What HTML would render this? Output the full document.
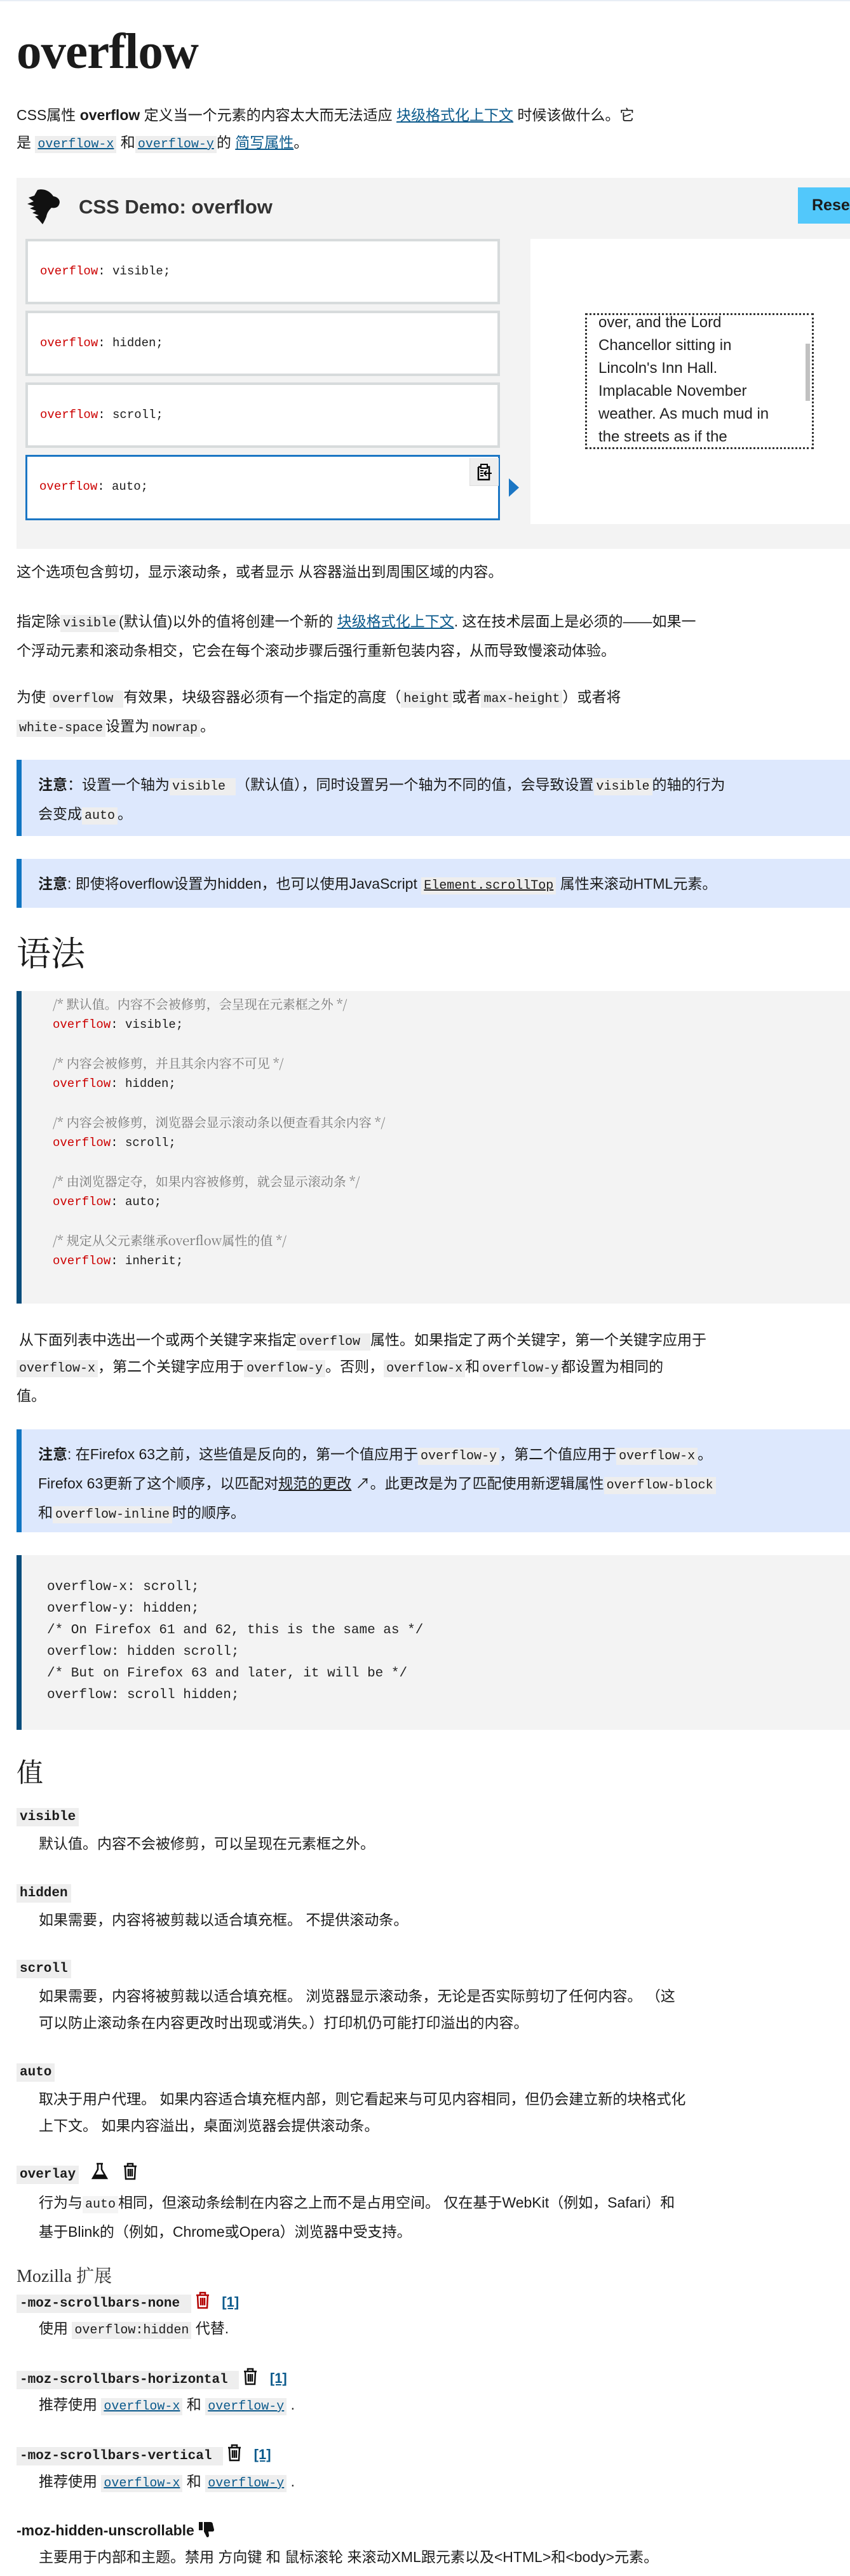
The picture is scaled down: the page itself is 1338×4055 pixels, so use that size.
<!DOCTYPE html>
<html><head><meta charset="utf-8">
<style>
*{margin:0;padding:0;box-sizing:border-box}
html,body{width:1338px;height:4055px;overflow:hidden;background:#fff}
body{position:relative;font-family:"Liberation Sans","Noto Sans CJK SC",sans-serif;font-size:23px;color:#1b1b1b;line-height:42px}
.a{position:absolute;left:26px;white-space:nowrap}
code,.m{font-family:"Liberation Mono","Noto Sans CJK SC",monospace;font-size:20px;background:#eeeeee;padding:2px 4px}
a{color:#0b5a8c;text-decoration:underline}
h1{position:absolute;left:26px;top:44px;font-family:"Liberation Serif",serif;font-weight:bold;font-size:79px;line-height:76px;letter-spacing:-1px}
.note{position:absolute;left:26px;right:0;background:#dde8fd;border-left:8px solid #1075c2;padding:18px 0 0 26px;white-space:nowrap}
.cb{position:absolute;left:26px;right:0;background:#f3f3f3;border-left:8px solid #0a4d7c;white-space:pre;font-family:"Liberation Mono","Noto Serif CJK SC",monospace}
.kw{color:#c00}
.cm{color:#777;font-family:"Noto Serif CJK SC","Liberation Mono",serif;font-size:20px}
.dt{position:absolute;left:26px;font-family:"Liberation Mono",monospace;font-weight:bold;font-size:21px;white-space:nowrap}
.dt span.c{background:#eee;padding:3px 5px}
.dd{position:absolute;left:61px;white-space:nowrap}
.ch{position:absolute;left:40px;width:747px;height:103px;background:#fff;border:4px solid #d7dbdc;font-family:"Liberation Mono",monospace;font-size:19px;padding-left:19px;line-height:95px}
</style></head><body>
<div style="position:absolute;left:0;top:0;width:1338px;height:2px;background:#e8eef5"></div>
<h1>overflow</h1>
<div class="a" style="top:160px;line-height:43px">CSS属性 <b>overflow</b> 定义当一个元素的内容太大而无法适应 <a>块级格式化上下文</a> 时候该做什么。它<br>是 <code><a>overflow-x</a></code> 和<code><a>overflow-y</a></code>的 <a>简写属性</a>。</div>

<div style="position:absolute;left:26px;top:280px;width:1312px;height:584px;background:#f3f3f3">
 <svg style="position:absolute;left:15px;top:17px" width="54" height="56" viewBox="0 0 54 56"><path d="M18 2 C28 -1 38 4 43 12 C50 13 55 18 52 25 C50 30 45 31 40 30 C36 34 33 38 32 44 C30 49 28 53 26 56 C22 51 19 47 14 44 L20 42 L10 38 L16 35 L6 31 L13 28 L2 24 L12 20 L4 14 L13 11 Z" fill="#111"/></svg>
 <div style="position:absolute;left:98px;top:26px;font-size:31px;font-weight:bold;color:#333;line-height:40px">CSS Demo: overflow</div>
 <div style="position:absolute;left:1230px;top:15px;width:90px;height:57px;background:#52c8fb;font-weight:bold;font-size:25px;line-height:57px;padding-left:22px;color:#1b1b1b">Reset</div>
 <div style="position:absolute;left:809px;top:96px;width:503px;height:449px;background:#fff"></div>
</div>
<div class="ch" style="top:376px"><span class="kw">overflow</span>: visible;</div>
<div class="ch" style="top:489px"><span class="kw">overflow</span>: hidden;</div>
<div class="ch" style="top:602px"><span class="kw">overflow</span>: scroll;</div>
<div class="ch" style="top:716px;border:3px solid #1b76c4;height:103px"><span class="kw">overflow</span>: auto;
 <div style="position:absolute;left:696px;top:2px;width:46px;height:44px;background:#eee;border-left:1px solid #ddd;border-bottom:1px solid #ddd">
  <svg style="position:absolute;left:10px;top:8px" width="24" height="28" viewBox="0 0 24 28"><path d="M3 6h4M17 6h3v20H3V6" fill="none" stroke="#000" stroke-width="2.5"/><rect x="7" y="2" width="10" height="6" fill="none" stroke="#000" stroke-width="2"/><path d="M6 12h5M6 16h4M6 20h5M24 16H12M16 12l-4 4 4 4" stroke="#000" stroke-width="2" fill="none"/></svg>
 </div>
</div>
<svg style="position:absolute;left:801px;top:753px" width="16" height="29"><path d="M0 0L16 14.5L0 29Z" fill="#1b76c4"/></svg>
<div style="position:absolute;left:921px;top:493px;width:360px;height:214px;border:3px dotted #333;overflow:hidden">
 <div style="position:absolute;left:18px;top:-6px;font-size:24px;line-height:36px;color:#222">over, and the Lord<br>Chancellor sitting in<br>Lincoln's Inn Hall.<br>Implacable November<br>weather. As much mud in<br>the streets as if the</div>
 <div style="position:absolute;right:3px;top:45px;width:7px;height:90px;background:#c1c1c1"></div>
</div>

<div class="a" style="top:879px">这个选项包含剪切，显示滚动条，或者显示 从容器溢出到周围区域的内容。</div>
<div class="a" style="top:957px">指定除<code>visible</code>(默认值)以外的值将创建一个新的 <a>块级格式化上下文</a>. 这在技术层面上是必须的——如果一<br>个浮动元素和滚动条相交，它会在每个滚动步骤后强行重新包装内容，从而导致慢滚动体验。</div>
<div class="a" style="top:1076px">为使 <code>overflow </code> 有效果，块级容器必须有一个指定的高度（<code>height</code>或者<code>max-height</code>）或者将<br><code>white-space</code>设置为<code>nowrap</code>。</div>

<div class="note" style="top:1196px;height:120px"><b>注意</b>：设置一个轴为<code>visible </code>（默认值），同时设置另一个轴为不同的值，会导致设置<code>visible</code>的轴的行为<br>会变成<code>auto</code>。</div>
<div class="note" style="top:1352px;height:77px"><b>注意</b>: 即使将overflow设置为hidden，也可以使用JavaScript <code><a style="color:#1b1b1b">Element.scrollTop</a></code> 属性来滚动HTML元素。</div>

<div class="a" style="top:1466px;font-family:'Noto Serif CJK SC',serif;font-size:54px;line-height:64px">语法</div>

<div class="cb" style="top:1560px;height:492px;padding:5px 0 0 49px;font-size:19px;line-height:30px"><span class="cm">/* 默认值。内容不会被修剪，会呈现在元素框之外 */</span>
<span class="kw">overflow</span>: visible;

<span class="cm">/* 内容会被修剪，并且其余内容不可见 */</span>
<span class="kw">overflow</span>: hidden;

<span class="cm">/* 内容会被修剪，浏览器会显示滚动条以便查看其余内容 */</span>
<span class="kw">overflow</span>: scroll;

<span class="cm">/* 由浏览器定夺，如果内容被修剪，就会显示滚动条 */</span>
<span class="kw">overflow</span>: auto;

<span class="cm">/* 规定从父元素继承overflow属性的值 */</span>
<span class="kw">overflow</span>: inherit;</div>

<div class="a" style="top:2088px;left:30px">从下面列表中选出一个或两个关键字来指定<code>overflow </code>属性。如果指定了两个关键字，第一个关键字应用于</div>
<div class="a" style="top:2130px"><code>overflow-x</code>，第二个关键字应用于<code>overflow-y</code>。否则，<code>overflow-x</code>和<code>overflow-y</code>都设置为相同的<br>值。</div>

<div class="note" style="top:2250px;height:162px"><b>注意</b>: 在Firefox 63之前，这些值是反向的，第一个值应用于<code>overflow-y</code>，第二个值应用于<code>overflow-x</code>。<br>Firefox 63更新了这个顺序，以匹配对<a style="color:#1b1b1b">规范的更改</a> ↗。此更改是为了匹配使用新逻辑属性<code>overflow-block</code><br>和<code>overflow-inline</code>时的顺序。</div>

<div class="cb" style="top:2448px;height:275px;padding:34px 0 0 40px;font-size:21px;line-height:34px;color:#222">overflow-x: scroll;
overflow-y: hidden;
/* On Firefox 61 and 62, this is the same as */
overflow: hidden scroll;
/* But on Firefox 63 and later, it will be */
overflow: scroll hidden;</div>

<div class="a" style="top:2760px;font-family:'Noto Serif CJK SC',serif;font-size:42px;line-height:56px">值</div>

<div class="dt" style="top:2840px"><span class="c">visible</span></div>
<div class="dd" style="top:2881px">默认值。内容不会被修剪，可以呈现在元素框之外。</div>
<div class="dt" style="top:2960px"><span class="c">hidden</span></div>
<div class="dd" style="top:3001px">如果需要，内容将被剪裁以适合填充框。 不提供滚动条。</div>
<div class="dt" style="top:3079px"><span class="c">scroll</span></div>
<div class="dd" style="top:3121px">如果需要，内容将被剪裁以适合填充框。 浏览器显示滚动条，无论是否实际剪切了任何内容。 （这<br>可以防止滚动条在内容更改时出现或消失。）打印机仍可能打印溢出的内容。</div>
<div class="dt" style="top:3242px"><span class="c">auto</span></div>
<div class="dd" style="top:3283px">取决于用户代理。 如果内容适合填充框内部，则它看起来与可见内容相同，但仍会建立新的块格式化<br>上下文。 如果内容溢出，桌面浏览器会提供滚动条。</div>
<div class="dt" style="top:3403px"><span class="c">overlay</span>
 <svg style="vertical-align:-4px;margin-left:6px" width="28" height="28" viewBox="0 0 28 28"><path d="M9 2h10M11 2v9L3 25h22L17 11V2" fill="none" stroke="#111" stroke-width="2.5"/><path d="M7 19h14l3 5H4z" fill="#111"/></svg>
 <svg style="vertical-align:-4px;margin-left:10px" width="24" height="28" viewBox="0 0 24 28"><path d="M2 6h20M8 6V2h8v4M4 6l1 20h14l1-20M9 10v12M12 10v12M15 10v12" fill="none" stroke="#111" stroke-width="2.5"/></svg></div>
<div class="dd" style="top:3446px">行为与<code style="background:#f4f4f4">auto</code>相同，但滚动条绘制在内容之上而不是占用空间。 仅在基于WebKit（例如，Safari）和<br>基于Blink的（例如，Chrome或Opera）浏览器中受支持。</div>

<div class="a" style="top:3566px;font-family:'Liberation Serif','Noto Serif CJK SC',serif;font-size:28px;line-height:36px;color:#333">Mozilla 扩展</div>

<div class="dt" style="top:3603px"><span class="c">-moz-scrollbars-none </span>
 <svg style="vertical-align:-4px;margin-left:6px" width="24" height="28" viewBox="0 0 24 28"><path d="M2 6h20M8 6V2h8v4M4 6l1 20h14l1-20M9 10v12M12 10v12M15 10v12" fill="none" stroke="#b30000" stroke-width="2.5"/></svg>
 <a style="font-family:'Liberation Sans';font-size:22px;margin-left:6px;color:#0b5a8c">[1]</a></div>
<div class="dd" style="top:3644px">使用 <code>overflow:hidden</code> 代替.</div>

<div class="dt" style="top:3723px"><span class="c">-moz-scrollbars-horizontal </span>
 <svg style="vertical-align:-4px;margin-left:6px" width="24" height="28" viewBox="0 0 24 28"><path d="M2 6h20M8 6V2h8v4M4 6l1 20h14l1-20M9 10v12M12 10v12M15 10v12" fill="none" stroke="#111" stroke-width="2.5"/></svg>
 <a style="font-family:'Liberation Sans';font-size:22px;margin-left:6px;color:#0b5a8c">[1]</a></div>
<div class="dd" style="top:3764px">推荐使用 <code><a>overflow-x</a></code> 和 <code><a>overflow-y</a></code> .</div>

<div class="dt" style="top:3843px"><span class="c">-moz-scrollbars-vertical </span>
 <svg style="vertical-align:-4px;margin-left:6px" width="24" height="28" viewBox="0 0 24 28"><path d="M2 6h20M8 6V2h8v4M4 6l1 20h14l1-20M9 10v12M12 10v12M15 10v12" fill="none" stroke="#111" stroke-width="2.5"/></svg>
 <a style="font-family:'Liberation Sans';font-size:22px;margin-left:6px;color:#0b5a8c">[1]</a></div>
<div class="dd" style="top:3885px">推荐使用 <code><a>overflow-x</a></code> 和 <code><a>overflow-y</a></code> .</div>

<div class="a" style="top:3962px;font-weight:bold;font-size:23px">-moz-hidden-unscrollable
 <svg style="vertical-align:-4px" width="26" height="28" viewBox="0 0 26 28"><path d="M1 3h6v13H1z" fill="#111"/><path d="M9 3h10c3 0 4 2 4 4l2 8c0 2-1 3-3 3h-6l1 6c0 3-3 4-4 2l-4-8z" fill="#111"/></svg></div>
<div class="dd" style="top:4004px">主要用于内部和主题。禁用 方向键 和 鼠标滚轮 来滚动XML跟元素以及&lt;HTML&gt;和&lt;body&gt;元素。</div>
</body></html>
